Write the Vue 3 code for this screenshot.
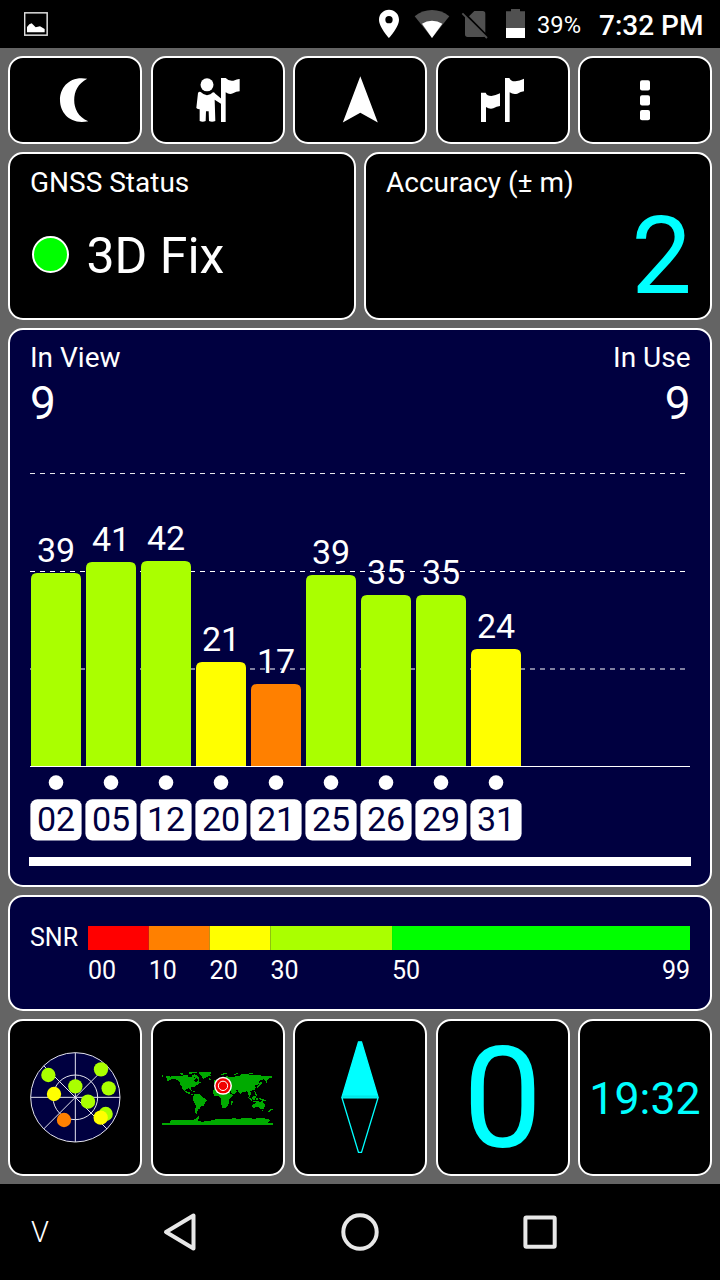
<script setup>
const LIME = '#aaff00'
const YELLOW = '#ffff00'
const ORANGE = '#ff8000'

const satellites = [
  { id: '02', snr: 39, top: 573, color: LIME },
  { id: '05', snr: 41, top: 562, color: LIME },
  { id: '12', snr: 42, top: 561, color: LIME },
  { id: '20', snr: 21, top: 662, color: YELLOW },
  { id: '21', snr: 17, top: 684, color: ORANGE },
  { id: '25', snr: 39, top: 575, color: LIME },
  { id: '26', snr: 35, top: 595, color: LIME },
  { id: '29', snr: 35, top: 595, color: LIME },
  { id: '31', snr: 24, top: 649, color: YELLOW }
].map((s, i) => ({ ...s, x: 31 + i * 55 }))

const barPath = (s) =>
  `M${s.x} 766V${s.top + 6}q0 -6 6 -6h38q6 0 6 6V766z`

const scale = [
  { from: 0, to: 10, label: '00', color: '#ff0000' },
  { from: 10, to: 20, label: '10', color: ORANGE },
  { from: 20, to: 30, label: '20', color: YELLOW },
  { from: 30, to: 50, label: '30', color: LIME },
  { from: 50, to: 99, label: '50', color: '#00ff00' }
]
const snrX = (v) => 88 + (v * 602) / 99

const sky = [
  [145, 180, LIME], [303, 163, LIME], [226, 214, LIME], [326, 220, LIME],
  [264, 260, LIME], [162, 237, YELLOW], [317, 297, LIME], [302, 308, YELLOW],
  [192, 315, ORANGE]
]
</script>

<template>
  <div class="screen">
    <header class="status">
      <svg class="shot" viewBox="72 36 72 72">
        <rect x="74" y="38.5" width="67.5" height="67" fill="none" stroke="#dedede" stroke-width="4.5" />
        <path d="M81 97V81L88 73L95 70L107 82L120 79L134 87V97z" fill="#fff" />
      </svg>
      <svg class="signals" viewBox="36 0 474 144">
        <path fill="#fff" fill-rule="evenodd" d="M87 29C70 29 57 42 57 59C57 81 87 114 87 114S117 81 117 59C117 42 104 29 87 29zM87 48a11 11 0 1 1 0 22a11 11 0 1 1 0 -22z" />
        <path fill="#505050" d="M216 114L164 49Q187 30 216 30T268 49z" />
        <path fill="#fff" d="M216 114L186 71Q199 62 216 62T247 71z" />
        <path fill="#505050" d="M343 33H368Q376 33 376 41V98L327 49zM315 48L376 109Q374 111 370 111H323Q315 111 315 103z" />
        <path fill="none" stroke="#505050" stroke-width="5.5" d="M307 40L381 114" />
        <path fill="#505050" d="M438 34H453V27H480V34H495V84H438z" />
        <path fill="#fff" d="M438 84H495V114H438z" />
      </svg>
      <span class="battery">39%</span>
      <span class="clock">7:32 PM</span>
    </header>

    <main class="board">
      <div class="five tools">
        <button class="card">
          <svg class="icon" viewBox="51 76 48 48"><path d="M87.2 78.7C70 75.500 60 87 60 100S70.500 125 88.300 121.200C78 117 74.200 108.500 74.200 100S78 83.500 87.200 78.700z" /></svg>
        </button>
        <button class="card">
          <svg class="icon" viewBox="194 76 48 48">
            <g transform="translate(140 50) scale(.33333)">
              <circle cx="201" cy="104.500" r="19.500" />
              <path d="M174 129Q177 124 182 126Q190 134 201 136Q212 134 219 127Q223 127 226 131L244 146V162L224 149L226 213Q216 217 207 213L206 184H198L197 213Q188 217 179 213V178Q173 178 169 174z" />
              <path d="M243 84H257Q266 94 280 92Q294 86 299 87V124Q289 124 279 130Q268 135 257 127V216H243z" />
            </g>
          </svg>
        </button>
        <button class="card">
          <svg class="icon" viewBox="336 76 48 48"><path d="M360.300 76.300L377.800 122.400L360.300 112.700L342.800 122.400z" /></svg>
        </button>
        <button class="card">
          <svg class="icon" viewBox="479 76 48 48">
            <g transform="translate(430 50) scale(.33333)">
              <path d="M153 128H167Q171 138 184 138Q197 136 210 130V168Q200 169 190 175Q178 178 168 171V216H153z" />
              <path d="M225 84H238Q243 95 256 94Q269 92 282 86V124Q272 125 262 131Q250 135 239 127V216H225z" />
            </g>
          </svg>
        </button>
        <button class="card">
          <svg class="icon" viewBox="621 76 48 48">
            <rect v-for="y in [80.200, 95.200, 110]" :key="y" x="640" :y="y" width="10" height="10.200" rx="2" />
          </svg>
        </button>
      </div>

      <div class="two">
        <section class="card info">
          <h2>GNSS Status</h2>
          <div class="fix"><i class="lamp"></i><span>3D Fix</span></div>
        </section>
        <section class="card info">
          <h2>Accuracy (± m)</h2>
          <div class="accuracy">2</div>
        </section>
      </div>

      <section class="card navy chart">
        <div class="counts">
          <div><h2>In View</h2><b>9</b></div>
          <div class="right"><h2>In Use</h2><b>9</b></div>
        </div>
        <svg class="plot" viewBox="29 426 662 450">
          <g stroke="#fff" stroke-dasharray="5 5">
            <path d="M30 473.500H690" stroke-opacity=".9" />
            <path d="M30 571.500H690" />
            <path d="M30 669H690" stroke-width="2" stroke-opacity=".5" />
          </g>
          <path v-for="s in satellites" :key="'b' + s.id" :d="barPath(s)" :fill="s.color" />
          <path d="M30 766.500H690" stroke="#fff" />
          <g v-for="s in satellites" :key="s.id" text-anchor="middle" font-size="34">
            <text :x="s.x + 25" :y="s.top - 11" fill="#fff">{{ s.snr }}</text>
            <circle :cx="s.x + 25" cy="782.600" r="7.300" fill="#fff" />
            <rect :x="s.x - 0.600" y="799.300" width="51.200" height="41.200" rx="7" fill="#fff" />
            <text :x="s.x + 25" y="831" fill="#000040">{{ s.id }}</text>
          </g>
          <path d="M29 857H691V866H29z" fill="#fff" />
        </svg>
      </section>

      <section class="card navy">
        <svg class="legend" viewBox="10 897 700 112" font-size="25" fill="#fff">
          <text x="30" y="945.500">SNR</text>
          <g v-for="s in scale" :key="s.label">
            <rect :x="snrX(s.from)" y="926" :width="snrX(s.to) - snrX(s.from)" height="24" :fill="s.color" />
            <text :x="snrX(s.from)" y="979.300">{{ s.label }}</text>
          </g>
          <text x="690" y="979.300" text-anchor="end">99</text>
        </svg>
      </section>

      <div class="five">
        <section class="card">
          <svg class="tile" viewBox="30 18 390 459">
            <circle cx="226" cy="247" r="134" fill="#000040" />
            <g fill="none" stroke="#e4e4ee" stroke-width="3">
              <circle cx="226" cy="247" r="134" />
              <circle cx="226" cy="247" r="67" />
              <path d="M92 247H360M226 113V381M131 152L321 342M321 152L131 342" />
            </g>
            <circle v-for="(p, i) in sky" :key="i" :cx="p[0]" :cy="p[1]" r="21.500" :fill="p[2]" />
          </svg>
        </section>
        <section class="card">
          <svg class="tile" viewBox="9.500 -87 390 459">
            <g fill="#00aa00" shape-rendering="crispEdges">
              <path d="M50 78L62 80L75 77L95 79L108 77L120 82L130 80L138 86L133 92L140 97L145 90L151 97L147 102L138 106L133 111L125 112L123 120L118 115L109 116L106 122L112 125L119 125L121 131L130 133L128 136L117 131L107 127L98 116L95 108L90 104L89 95L79 88L66 87L55 93L50 96L53 88L49 84z" />
              <path d="M36 76h4v4h-4zM89 71l9 -2l4 3l-6 3zM99 77l10 -3l8 3l-5 4zM118 66h24l-5 4h-9l-4 4l-8 -2zM126 75l10 -2l14 11l-4 5l-10 -7l-8 -2zM124 121l8 2l7 4l-5 0zM144 96h8v4h-6z" />
              <path d="M143 68L158 66H186L181 72L183 77L169 81L162 87L156 82L154 75L147 71z" />
              <path d="M132 134L140 131L150 133L157 141L169 147L171 152L165 158L162 167L153 170L149 177L144 179L142 185L140 192L135 189L134 179L138 171L136 161L129 150z" />
              <path d="M191 119L205 113L213 120L226 117L237 121L242 133L250 134L244 143L237 149L238 161L230 171L225 175L218 173L213 160L214 146L208 139L194 137L189 131zM245 153l4 2l-3 10l-4 -2z" />
              <path d="M194 106L205 99L210 88L221 81L233 79L249 82L263 77L278 76L290 72L300 74L307 76L328 75L342 79L365 78L368 82L358 85L354 89L350 98L343 88L334 90L327 94L327 102L318 106L314 105L318 113L314 119L306 122L301 124L304 132L299 137L303 145L298 140L294 128L290 124L284 127L276 124L274 134L269 130L264 121L255 120L262 125L253 133L247 131L238 119L242 110L225 112L206 110z" />
              <path d="M191 92l5 -3l5 9l-7 3zM173 86l7 -1l5 3l-6 3zM210 71h12v4h-8zM218 70h14v3h-10zM251 75l9 -5l5 0l-10 7zM272 71h12v3h-12zM298 70h10v3h-10zM328 101l6 -6l3 4l-8 8l-6 6l-2 -3z" />
              <path d="M293 137l15 14l-2 3l-13 -12zM308 141l8 -4l3 5l-5 7l-7 -1zM318 144l5 0v6h-5zM313 124l6 3l2 11l-5 -5zM327 144l14 3l9 6l-8 0l-12 -4zM309 152h14v3h-14z" />
              <path d="M307 164L316 160L323 154L333 155L338 153L345 164L346 169L340 177L332 177L327 172L318 172L309 175zM334 179h6l-3 5zM366 175l3 4l-8 5l-4 3l-3 -3z" />
              <path d="M36 219L62 218L60 212L78 210L92 211L101 209L123 211L139 207L143 200L148 198V204L143 212L155 215L182 213L189 209L216 207L238 207L254 204L265 207L285 204L313 206L335 204L357 207L362 212L354 218H369V225H36z" />
            </g>
            <circle cx="219.500" cy="107.500" r="27" fill="#fff" />
            <circle cx="219.500" cy="107.500" r="22.500" fill="#f00000" />
            <circle cx="219.500" cy="107.500" r="14" fill="none" stroke="#fff" stroke-width="3" />
          </svg>
        </section>
        <section class="card">
          <svg class="tile" viewBox="15 18 390 459">
            <g stroke="#00ffff" stroke-width="4">
              <path d="M205.500 80.500H214.500L264 246H156z" fill="#00ffff" />
              <path d="M156 248.500H264L214.500 412H205.500z" fill="none" />
            </g>
            <path d="M158 243.500H262" stroke="#00c8c8" stroke-width="2" />
          </svg>
        </section>
        <section class="card value"><span class="speed">0</span></section>
        <section class="card value"><span class="time">19:32</span></section>
      </div>
    </main>

    <nav class="nav">
      <svg viewBox="0 1184 720 96" fill="none" stroke="#e8e8e8" stroke-width="4">
        <text x="40" y="1242" text-anchor="middle" font-size="29" font-weight="300" fill="#fff" stroke="none">V</text>
        <path d="M193.500 1215.500V1248.500L166 1232z" stroke-linejoin="round" />
        <circle cx="360" cy="1232" r="16.700" />
        <rect x="525.400" y="1217.400" width="29.300" height="29.300" rx="1" />
      </svg>
    </nav>
  </div>
</template>

<style>
body { margin: 0; background: #000; }
</style>

<style scoped>
.screen {
  width: 720px;
  height: 1280px;
  overflow: hidden;
  display: flex;
  flex-direction: column;
  background: #646464;
  color: #fff;
  font-family: Roboto, sans-serif;
}
.status {
  height: 48px;
  flex: none;
  display: flex;
  align-items: center;
  background: #000;
  padding-left: 24px;
}
.shot { width: 24px; height: 24px; }
.signals { width: 158px; height: 48px; margin-left: 324px; }
.battery { width: 62px; margin-left: 7px; font-size: 23.700px; line-height: 48px; padding-top: 1px; }
.clock { font-size: 28px; font-weight: 500; line-height: 48px; padding-top: 3px; white-space: nowrap; }
.board {
  box-sizing: border-box;
  height: 1136px;
  padding: 8px;
  display: grid;
  grid-template-rows: 88px 167.500px 559.500px 116px 157px;
  row-gap: 8px;
}
.five { display: grid; grid-template-columns: repeat(5, 134px); justify-content: space-between; }
.two { display: grid; grid-template-columns: 1fr 1fr; column-gap: 8px; }
.card {
  box-sizing: border-box;
  min-width: 0;
  min-height: 0;
  margin: 0;
  padding: 0;
  background: #000;
  border: 2px solid #fff;
  border-radius: 15px;
}
.navy { background: #000040; }
.tools .card { display: flex; align-items: center; justify-content: center; }
.icon { width: 48px; height: 48px; fill: #fff; }
h2 { margin: 0; font-size: 28px; line-height: 28px; font-weight: 400; white-space: nowrap; }
.info { padding: 14.500px 20px 0; }
.fix { display: flex; align-items: center; gap: 17.500px; margin-top: 34px; font-size: 50px; line-height: 50px; }
.lamp {
  box-sizing: border-box;
  width: 37px;
  height: 37px;
  margin: -2px 0 0 2px;
  border: 2px solid #fff;
  border-radius: 50%;
  background: #00ff00;
}
.accuracy { margin: 5.500px -2px 0 0; text-align: right; color: #00ffff; font-size: 108px; line-height: 108px; }
.chart { padding: 14px 19px 0; }
.counts { display: flex; justify-content: space-between; padding: 0 .5px 0 1px; }
.counts b { display: block; margin-top: 8px; font-size: 46px; line-height: 46px; font-weight: 400; }
.right { text-align: right; }
.plot { display: block; width: 662px; height: 450px; }
.legend { display: block; width: 700px; height: 112px; }
.tile { display: block; width: 130px; height: 153px; }
.value { display: flex; align-items: center; justify-content: center; color: #00ffff; }
.speed { font-size: 141px; line-height: 150px; padding-top: 3px; }
.time { font-size: 44.700px; line-height: 46px; padding-top: 2px; }
.nav { height: 96px; background: #000; }
.nav svg { display: block; width: 720px; height: 96px; }
</style>
